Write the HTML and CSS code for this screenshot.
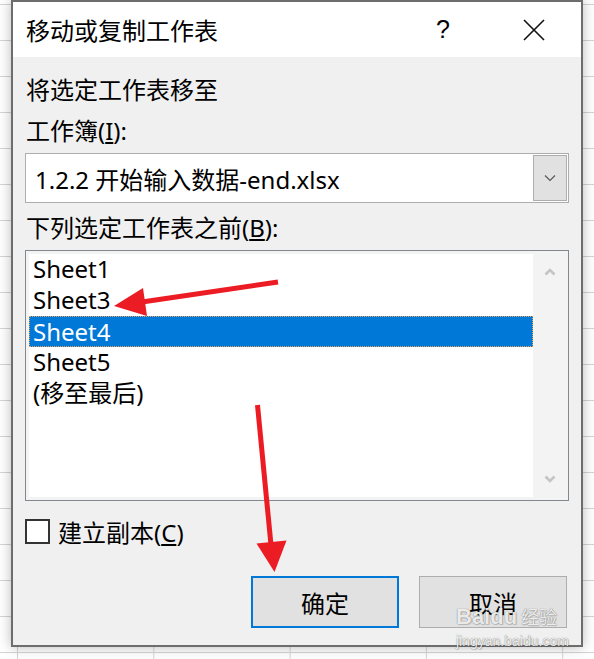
FILE: index.html
```html
<!DOCTYPE html>
<html lang="zh-CN">
<head>
    <meta charset="UTF-8">
    <meta name="viewport" content="width=device-width, initial-scale=1.0">
    <title>移动或复制工作表</title>
    <link rel="stylesheet" href="styles.css">
</head>
<body>
    <div class="dialog">
        <div class="titlebar">
            <span class="title">移动或复制工作表</span>
            <span class="tb-btn help">?</span>
            <span class="tb-btn close">
                <svg width="22" height="22" viewBox="0 0 22 22"><path d="M1 1 L21 21 M21 1 L1 21" stroke="#111" stroke-width="1.6" fill="none"/></svg>
            </span>
        </div>
        <div class="content">
            <div class="label first">将选定工作表移至</div>
            <div class="label">工作簿(<u>I</u>):</div>
            <div class="combo">
                <span class="combo-text">1.2.2 开始输入数据-end.xlsx</span>
                <span class="combo-btn">
                    <svg width="12" height="8" viewBox="0 0 12 8"><path d="M1 1.5 L6 6.5 L11 1.5" stroke="#555" stroke-width="1.1" fill="none"/></svg>
                </span>
            </div>
            <div class="label">下列选定工作表之前(<u>B</u>):</div>
            <div class="listbox">
                <ul class="items">
                    <li>Sheet1</li>
                    <li>Sheet3</li>
                    <li class="selected">Sheet4</li>
                    <li>Sheet5</li>
                    <li>(移至最后)</li>
                </ul>
                <div class="scrollbar">
                    <svg width="12" height="8" viewBox="0 0 12 8"><path d="M1.5 6.5 L6 2 L10.5 6.5" stroke="#c4c4c4" stroke-width="2.6" fill="none"/></svg>
                    <svg width="12" height="8" viewBox="0 0 12 8"><path d="M1.5 1.5 L6 6 L10.5 1.5" stroke="#c4c4c4" stroke-width="2.6" fill="none"/></svg>
                </div>
            </div>
            <div class="check">
                <span class="box"></span>
                <span>建立副本(<u>C</u>)</span>
            </div>
            <div class="buttons">
                <button class="btn default">确定</button>
                <button class="btn">取消</button>
            </div>
        </div>
    </div>

    <!-- annotation arrows drawn over the dialog -->
    <svg class="marks" width="594" height="659" viewBox="0 0 594 659">
        <line x1="278" y1="282" x2="142" y2="302" stroke="#ec1c24" stroke-width="5"/>
        <polygon points="114,306 143,288 147,316" fill="#ec1c24"/>
        <line x1="257.5" y1="405" x2="271" y2="545" stroke="#ec1c24" stroke-width="5"/>
        <polygon points="274.5,572 256.5,543.5 286.5,540.5" fill="#ec1c24"/>
    </svg>

    <div class="watermark">
        <div class="wm-logo">Baidu<span class="wm-cn">经验</span></div>
        <div class="wm-url">jingyan.baidu.com</div>
    </div>
</body>
</html>
```
FILE: styles.css
```css
html, body {
    margin: 0;
    padding: 0;
    width: 594px;
    height: 659px;
    overflow: hidden;
}

body {
    position: relative;
    font-family: "Noto Sans", "Noto Sans CJK SC", sans-serif;
    font-size: 24px;
    color: #000;
    background-color: #fff;
    background-image:
        linear-gradient(to right, #d4d4d4 1px, transparent 1px),
        linear-gradient(to bottom, #d4d4d4 1px, transparent 1px);
    background-size: 136.3px 36px;
    background-position: 17px 4px;
}

.dialog {
    box-sizing: border-box;
    width: 572px;
    height: 647px;
    margin-left: 11px;
    border: 2px solid #6d6d6d;
    background-color: #f0f0f0;
    box-shadow: 0 0 12px rgba(0, 0, 0, 0.28);
}

.titlebar {
    display: flex;
    align-items: center;
    height: 55px;
    background-color: #fff;
}

.title {
    flex: 1;
    padding-left: 13px;
}

.tb-btn {
    display: flex;
    align-items: center;
    justify-content: center;
    height: 55px;
}

.help {
    width: 88px;
    font-family: "Liberation Sans", sans-serif;
    font-size: 25px;
}

.close {
    width: 94px;
}

.content {
    padding: 17px 12px 17px 12px;
}

.label {
    height: 32px;
    line-height: 32px;
    padding-left: 1px;
    margin-top: 9px;
}

.label.first {
    margin-top: 0;
}

.combo {
    box-sizing: border-box;
    display: flex;
    align-items: stretch;
    height: 50px;
    margin-top: 6px;
    padding: 1px;
    border: 1px solid #adadad;
    background-color: #fff;
}

.combo-text {
    flex: 1;
    display: flex;
    align-items: center;
    padding-left: 8px;
}

.combo-btn {
    box-sizing: border-box;
    width: 34px;
    display: flex;
    align-items: center;
    justify-content: center;
    background-color: #e1e1e1;
    border: 1px solid #adadad;
}

.listbox {
    box-sizing: border-box;
    display: flex;
    height: 251px;
    margin-top: 6px;
    padding: 3px 1px 3px 3px;
    border: 1px solid #828790;
    background-color: #f3f3f3;
}

.items {
    flex: 1;
    margin: 0;
    padding: 0;
    list-style: none;
    background-color: #fff;
}

.items li {
    box-sizing: border-box;
    height: 31px;
    line-height: 30px;
    padding-left: 4px;
}

.items li.selected {
    background-color: #0078d7;
    color: #fff;
    border: 1px dotted #e8a25c;
    padding-left: 3px;
}

.scrollbar {
    width: 34px;
    display: flex;
    flex-direction: column;
    align-items: center;
    justify-content: space-between;
    padding: 14px 0 14px 0;
}

.check {
    display: flex;
    align-items: center;
    gap: 8px;
    height: 24px;
    margin-top: 18px;
}

.box {
    box-sizing: border-box;
    width: 25px;
    height: 25px;
    border: 2px solid #333;
    background-color: #fff;
}

.buttons {
    display: flex;
    justify-content: flex-end;
    gap: 20px;
    margin-top: 33px;
    padding-right: 2px;
}

.btn {
    box-sizing: border-box;
    width: 148px;
    height: 52px;
    font-family: "Noto Sans", "Noto Sans CJK SC", sans-serif;
    font-size: 24px;
    color: #000;
    background-color: #e1e1e1;
    border: 1px solid #adadad;
    padding: 0;
}

.btn.default {
    border: 2px solid #0078d7;
}

.marks {
    position: absolute;
    left: 0;
    top: 0;
    pointer-events: none;
}

.watermark {
    position: absolute;
    left: 456px;
    top: 606px;
    color: rgba(255, 255, 255, 0.9);
    text-shadow: 0 0 1px rgba(0, 0, 0, 0.6), 1px 1px 1px rgba(0, 0, 0, 0.15);
    line-height: 1;
}

.wm-logo {
    font-family: "Liberation Sans", sans-serif;
    font-weight: bold;
    font-size: 22px;
}

.wm-cn {
    font-family: "Noto Sans CJK SC", sans-serif;
    font-weight: normal;
    font-size: 18px;
    margin-left: 4px;
}

.wm-url {
    font-family: "Liberation Sans", sans-serif;
    font-size: 14px;
    margin-top: 6px;
}
```
